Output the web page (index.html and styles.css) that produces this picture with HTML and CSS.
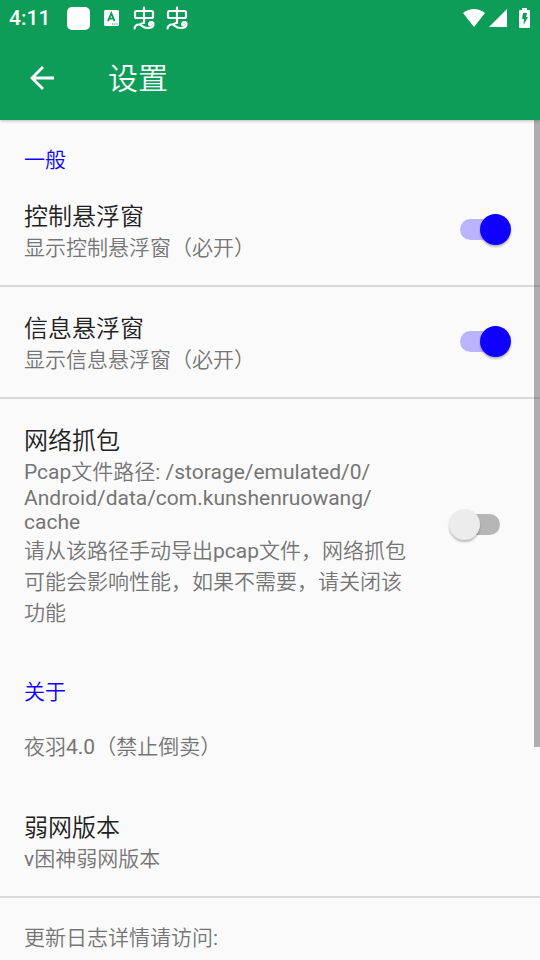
FILE: index.html
```html
<!DOCTYPE html>
<html lang="zh-CN">
<head>
    <meta charset="UTF-8">
    <meta name="viewport" content="width=device-width, initial-scale=1.0">
    <title>设置</title>
    <link rel="stylesheet" href="styles.css">
</head>
<body>

<header class="app-header">
    <div class="status-bar">
        <span class="clock">4:11</span>
        <span class="blank-icon"></span>
        <svg class="letter-icon" width="15" height="16" viewBox="0 0 15 16">
            <rect width="15" height="16" rx="1.5" fill="#fff"/>
            <path d="M4 11.2 7.3 3.4 10.6 11.2M5.2 8.6H9.4" fill="none" stroke="#0d9d58" stroke-width="1.8"/>
            <path d="M8 14h1.2M10.2 14h1.2M12.4 14h1.2" stroke="#0d9d58" stroke-width="1.2"/>
        </svg>
        <svg class="bug-icon" width="22" height="24" viewBox="0 0 22 24">
            <path d="M3.500 5h15q1.500 0 1.500 1.500v4q0 1.500-1.500 1.500h-15Q2 12 2 10.500v-4Q2 5 3.500 5zM11 1.500V17M1.500 22.500C2 19.500 4 18.500 6 18.500c3 0 3 3.500 8.500 3.500 3.500 0 6-1.500 6-3.800 0-2.700-4.500-2.700-4.500-.2 0 1.200 1.500 1.500 2 .5M11 17q-2.500 0-4 1.500"/>
        </svg>
        <svg class="bug-icon" width="22" height="24" viewBox="0 0 22 24">
            <path d="M3.500 5h15q1.500 0 1.500 1.500v4q0 1.500-1.500 1.500h-15Q2 12 2 10.500v-4Q2 5 3.500 5zM11 1.500V17M1.500 22.500C2 19.500 4 18.500 6 18.500c3 0 3 3.500 8.500 3.500 3.500 0 6-1.500 6-3.800 0-2.700-4.500-2.700-4.500-.2 0 1.200 1.500 1.500 2 .5M11 17q-2.500 0-4 1.500"/>
        </svg>
        <div class="system-icons">
            <svg width="22" height="18" viewBox="0 0 22 18" fill="#fff">
                <path d="M0 4Q11-4 22 4L11 18z"/>
            </svg>
            <svg width="18" height="18" viewBox="0 0 18 18" fill="#fff">
                <path d="M18 0v18H0z"/>
            </svg>
            <svg class="battery" width="11" height="20" viewBox="0 0 11 20">
                <path d="M3 0h5v2h2q1 0 1 1v16q0 1-1 1H1q-1 0-1-1V3q0-1 1-1h2z" fill="#fff"/>
                <path d="M4 5h4L7 9h2l-4.500 8 .5-6H3z" fill="#0d9d58"/>
            </svg>
        </div>
    </div>
    <div class="toolbar">
        <button class="back-button" type="button" aria-label="返回">
            <svg width="24" height="24" viewBox="0 0 24 24" fill="none" stroke="#fff" stroke-width="2.800">
                <path d="M24 12H2M13 1 2 12l11 11"/>
            </svg>
        </button>
        <h1>设置</h1>
    </div>
</header>

<main class="settings">
    <h2>一般</h2>
    <label class="item divider">
        <span class="text">
            <span class="title">控制悬浮窗</span>
            <span class="summary">显示控制悬浮窗（必开）</span>
        </span>
        <input class="switch" type="checkbox" role="switch" checked>
    </label>
    <label class="item divider">
        <span class="text">
            <span class="title">信息悬浮窗</span>
            <span class="summary">显示信息悬浮窗（必开）</span>
        </span>
        <input class="switch" type="checkbox" role="switch" checked>
    </label>
    <label class="item">
        <span class="text">
            <span class="title">网络抓包</span>
            <span class="summary">Pcap文件路径: /storage/emulated/0/</span>
            <span class="summary latin">Android/data/com.kunshenruowang/<br>cache</span>
            <span class="summary">请从该路径手动导出pcap文件，网络抓包可能会影响性能，如果不需要，请关闭该功能</span>
        </span>
        <input class="switch" type="checkbox" role="switch">
    </label>

    <h2>关于</h2>
    <div class="item">
        <span class="summary">夜羽4.0（禁止倒卖）</span>
    </div>
    <div class="item divider">
        <span class="text">
            <span class="title">弱网版本</span>
            <span class="summary">v困神弱网版本</span>
        </span>
    </div>
    <div class="item">
        <span class="summary">更新日志详情请访问:</span>
    </div>
    <div class="scrollbar"></div>
</main>

</body>
</html>
```

FILE: styles.css
```css
* {
    box-sizing: border-box;
}
body {
    display: flex;
    flex-direction: column;
    height: 100vh;
    margin: 0;
    overflow: hidden;
    background-color: #fafafa;
    font-family: Roboto, "Noto Sans CJK SC DemiLight", "Noto Sans CJK SC", sans-serif;
}

/* Header */
.app-header {
    flex: none;
    background-color: #0d9d58;
    color: #fff;
    box-shadow: 0 1px 3px rgba(0, 0, 0, 0.25);
}
.status-bar {
    display: flex;
    align-items: center;
    height: 36px;
    padding: 0 10px 0 9px;
}
.clock {
    font-size: 21px;
    font-weight: 500;
    line-height: 36px;
}
.blank-icon {
    width: 23px;
    height: 23px;
    margin-left: 17px;
    border-radius: 5px;
    background-color: #fff;
}
.letter-icon {
    margin: 0 14px;
}
.bug-icon {
    margin-right: 11px;
    fill: none;
    stroke: #fff;
    stroke-width: 2.2;
    stroke-linecap: round;
    stroke-linejoin: round;
}
.system-icons {
    display: flex;
    align-items: center;
    gap: 4px;
    margin-left: auto;
}
.battery {
    margin-left: 8px;
}
.toolbar {
    display: flex;
    align-items: center;
    height: 84px;
    padding-left: 18px;
}
.back-button {
    display: flex;
    align-items: center;
    justify-content: center;
    width: 48px;
    height: 48px;
    padding: 0;
    border: none;
    background: none;
}
h1 {
    margin: 0 0 0 42px;
    padding-top: 2px;
    font-size: 30px;
    font-weight: 350;
    line-height: 44px;
}

/* Settings list */
.settings {
    position: relative;
    flex: 1;
    min-height: 0;
    overflow: hidden;
}
h2 {
    margin: 0;
    padding: 25px 24px 0;
    color: #1000ff;
    font-size: 21px;
    font-weight: 350;
    line-height: 30px;
}
.item {
    display: flex;
    align-items: center;
    justify-content: space-between;
    padding: 25px 29px 23px 24px;
}
.divider {
    padding-bottom: 21px;
    border-bottom: 2px solid #dadada;
}
.text {
    flex: 1;
    max-width: 384px;
}
.title,
.summary {
    display: block;
}
.title {
    padding-top: 1px;
    color: #212121;
    font-size: 24px;
    font-weight: 350;
    line-height: 32px;
}
.summary {
    color: #757575;
    font-size: 21px;
    line-height: 31px;
}
.latin {
    margin: -2px 0 2px;
    line-height: 24px;
}

/* Switch */
.switch {
    position: relative;
    flex: none;
    width: 62px;
    height: 31px;
    margin: 0 0 5px;
    appearance: none;
}
.switch::before {
    content: "";
    position: absolute;
    top: 5px;
    left: 11px;
    width: 40px;
    height: 21px;
    border-radius: 11px;
    background-color: #b6b6b6;
}
.switch::after {
    content: "";
    position: absolute;
    top: 0;
    left: 0;
    width: 31px;
    height: 31px;
    border-radius: 50%;
    background-color: #ececec;
    box-shadow: 0 2px 2px rgba(0, 0, 0, 0.25);
}
.switch:checked::before {
    background-color: #b9b4fb;
}
.switch:checked::after {
    left: 31px;
    background-color: #1000ff;
}

.scrollbar {
    position: absolute;
    top: 0;
    right: 0;
    width: 6px;
    height: 74.6%;
    background-color: rgba(0, 0, 0, 0.3);
}
```
